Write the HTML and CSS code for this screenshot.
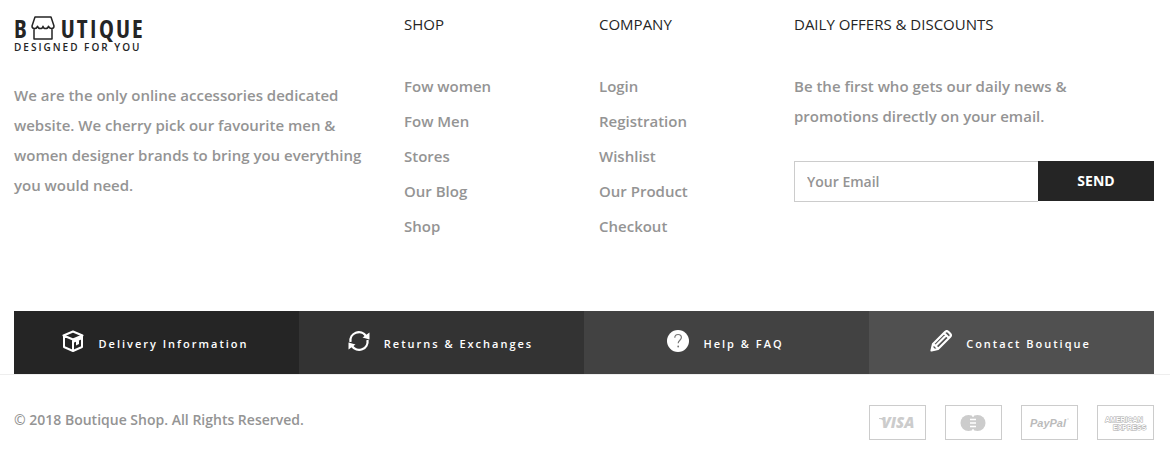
FILE: index.html
```html
<!DOCTYPE html>
<html lang="en">
<head>
<meta charset="utf-8">
<meta name="viewport" content="width=device-width, initial-scale=1">
<title>Boutique Shop</title>
<link rel="stylesheet" href="styles.css">
</head>
<body>
<footer class="footer">
  <div class="columns">
    <section class="column about">
      <a class="logo" href="#" aria-label="Boutique, designed for you">
        <span class="logo-name">
          <span>B</span>
          <svg class="logo-shop" viewBox="0 0 24 24" width="24" height="24" fill="none" stroke="#252525" stroke-width="1.500" stroke-linejoin="round"><path d="M4 1h16l3 9c0 1.600-1 2.500-2.300 2.500S18 12 17.500 10.300c-.4 1.600-1.400 2.300-2.800 2.300S12.400 12 12 10.300c-.4 1.700-1.400 2.300-2.700 2.300S7 12 6.500 10.300C6 12 5 12.600 3.400 12.500 2 12.500 1 11.500 1 10zM3 12.500V23h18V12.500"/></svg>
          <span>UTIQUE</span>
        </span>
        <span class="logo-tagline">DESIGNED FOR YOU</span>
      </a>
      <p class="text">We are the only online accessories dedicated website. We cherry pick our favourite men &amp; women designer brands to bring you everything you would need.</p>
    </section>
    <nav class="column" aria-labelledby="shop-title">
      <h2 class="title" id="shop-title">SHOP</h2>
      <ul class="links">
        <li><a href="#">Fow women</a></li>
        <li><a href="#">Fow Men</a></li>
        <li><a href="#">Stores</a></li>
        <li><a href="#">Our Blog</a></li>
        <li><a href="#">Shop</a></li>
      </ul>
    </nav>
    <nav class="column" aria-labelledby="company-title">
      <h2 class="title" id="company-title">COMPANY</h2>
      <ul class="links">
        <li><a href="#">Login</a></li>
        <li><a href="#">Registration</a></li>
        <li><a href="#">Wishlist</a></li>
        <li><a href="#">Our Product</a></li>
        <li><a href="#">Checkout</a></li>
      </ul>
    </nav>
    <section class="column">
      <h2 class="title">DAILY OFFERS &amp; DISCOUNTS</h2>
      <p class="text offer">Be the first who gets our daily news &amp; promotions directly on your email.</p>
      <form class="subscribe">
        <input class="email" type="email" placeholder="Your Email" aria-label="Your Email">
        <button class="send" type="submit">SEND</button>
      </form>
    </section>
  </div>

  <nav class="services" aria-label="Services">
    <a class="service delivery" href="#">
      <svg viewBox="0 0 22 22" width="22" height="22" fill="none" stroke="#fff" stroke-width="2" stroke-linejoin="round"><path d="M11 1.500 1.500 5.500 11 9.500l9.500-4zM2 6v11l9 4 9-4V6M11 9.500V21"/><path d="M11 9 20.500 5.500v3.500L11 13z" fill="#fff" stroke="none"/><path d="M14 11v4.500l3-1.500v-4z" fill="#fff" stroke="none"/></svg>
      <span>Delivery Information</span>
    </a>
    <a class="service returns" href="#">
      <svg viewBox="0 0 22 22" width="22" height="22" fill="none" stroke="#fff" stroke-width="2.300"><path d="M2.500 12A8.500 8.500 0 0 1 18 6M19.500 10A8.500 8.500 0 0 1 4 16"/><path d="M21.500 2.500v7l-7-2zM.500 19.500v-7l7 2z" fill="#fff" stroke="none"/></svg>
      <span>Returns &amp; Exchanges</span>
    </a>
    <a class="service help" href="#">
      <svg viewBox="0 0 22 22" width="22" height="22"><circle cx="11" cy="11" r="11" fill="#fff"/><path d="M7.800 7.800c0-2.200 1.300-3.300 3.300-3.300s3.300 1.300 3.300 3.100c0 2.700-3.200 2.700-3.200 5.700" fill="none" stroke="#777" stroke-width="1.200"/><circle cx="11.200" cy="16.500" r=".9" fill="#777"/></svg>
      <span>Help &amp; FAQ</span>
    </a>
    <a class="service contact" href="#">
      <svg viewBox="0 0 22 22" width="22" height="22" fill="none" stroke="#fff" stroke-width="2.200" stroke-linejoin="round"><path d="M1.500 20.500 3 14 15 2c1-1 2.500-1 3.500 0L20 3.500c1 1 1 2.500 0 3.500L8 19zM3.500 14 8 18.500M6 15.500 16 5.500M14 3l5 5"/><path d="M1 21l1-5 4 4z" fill="#fff" stroke="none"/></svg>
      <span>Contact Boutique</span>
    </a>
  </nav>

  <div class="bottom">
    <p class="copyright">© 2018 Boutique Shop. All Rights Reserved.</p>
    <ul class="payments">
      <li class="card"><svg viewBox="0 0 55 33" width="55" height="33" role="img" aria-label="Visa"><text class="visa" x="28" y="22" text-anchor="middle">VISA</text><path d="M9 12h5l2 5c-2-2-4-4-7-4z" fill="#ccc"/></svg></li>
      <li class="card"><svg viewBox="0 0 55 33" width="55" height="33" fill="#ccc" role="img" aria-label="Mastercard"><circle cx="22.500" cy="17" r="8"/><circle cx="31.500" cy="17" r="8"/><path d="M24 13.500h6M24 17h6M24 20.500h6M27 8v3M27 23v3" stroke="#fff" stroke-width="1.300"/></svg></li>
      <li class="card"><svg viewBox="0 0 55 33" width="55" height="33" role="img" aria-label="PayPal"><text class="paypal" x="26" y="21" text-anchor="middle">PayPal</text><path d="M45 13h2" stroke="#ddd"/></svg></li>
      <li class="card"><svg viewBox="0 0 55 33" width="55" height="33" role="img" aria-label="American Express"><text class="amex" x="7" y="16">AMERICAN</text><text class="amex" x="15" y="24">EXPRESS</text></svg></li>
    </ul>
  </div>
</footer>
</body>
</html>
```
FILE: styles.css
```css
* {
  box-sizing: border-box;
}

body {
  margin: 0;
  background: #fff;
  color: #949494;
  font: 600 15px/30px "Open Sans", sans-serif;
}

h2,
p,
ul {
  margin: 0;
  padding: 0;
}

ul {
  list-style: none;
}

a {
  color: inherit;
  text-decoration: none;
}

.columns {
  display: grid;
  grid-template-columns: 4fr 2fr 2fr 4fr;
  padding: 9px 0 67px;
}

.column {
  padding: 0 16px 0 14px;
}

.logo {
  display: block;
  padding-top: 6px;
  margin-bottom: 27px;
  color: #252525;
}

.logo-name {
  display: flex;
  align-items: center;
  gap: 2px;
  height: 26px;
  font: 700 25px/26px "Open Sans Condensed", "Liberation Sans Narrow", "DejaVu Sans Condensed", sans-serif;
  letter-spacing: 2px;
}

.logo-shop {
  flex: none;
  margin-right: 4px;
}

.logo-tagline {
  display: block;
  font-size: 10px;
  line-height: 12px;
  letter-spacing: 2px;
}

.title {
  color: #252525;
  font-size: 15px;
  font-weight: 500;
  line-height: 30px;
}

.links {
  margin-top: 30px;
  line-height: 35px;
}

.offer {
  margin-top: 32px;
}

.subscribe {
  display: flex;
  align-items: flex-start;
  margin-top: 30px;
}

.email {
  flex: 1;
  min-width: 0;
  height: 41px;
  padding: 0 12px;
  border: 1px solid #ccc;
  border-right: 0;
  border-radius: 0;
  background: #fff;
  color: #949494;
  font: inherit;
  font-size: 14px;
}

.email::placeholder {
  color: #949494;
  opacity: 1;
}

.send {
  width: 116px;
  height: 40px;
  padding: 0;
  border: 0;
  background: #252525;
  color: #fff;
  font: 700 14px/20px "Open Sans", sans-serif;
}

.services {
  display: grid;
  grid-template-columns: repeat(4, 1fr);
  margin: 0 16px 0 14px;
}

.service {
  display: flex;
  align-items: center;
  justify-content: center;
  gap: 14px;
  height: 63px;
  padding: 0 2px 4px 0;
  color: #fff;
  font-size: 11px;
  font-weight: 600;
  letter-spacing: 2px;
}

.service span {
  padding-top: 6px;
}

.delivery {
  background: #252525;
}

.returns {
  background: #333;
}

.help {
  background: #424242;
}

.contact {
  background: #505050;
}

.bottom {
  display: flex;
  align-items: flex-start;
  justify-content: space-between;
  padding: 30px 16px 20px 14px;
  border-top: 1px solid #eee;
}

.copyright {
  font-size: 14px;
}

.payments {
  display: flex;
  gap: 19px;
}

.card {
  display: flex;
  border: 1px solid #ccc;
}

.visa,
.paypal,
.amex {
  fill: #ccc;
  font-family: "Open Sans", sans-serif;
  font-style: italic;
  font-weight: 800;
}

.visa {
  font-size: 15px;
}

.paypal {
  fill: #bbb;
  font-family: "Liberation Sans", sans-serif;
  font-size: 11px;
  font-weight: 700;
}

.amex {
  fill: #fff;
  stroke: #aaa;
  stroke-width: 1px;
  paint-order: stroke;
  font-family: "Liberation Sans", sans-serif;
  font-size: 7px;
  font-style: normal;
}
```
